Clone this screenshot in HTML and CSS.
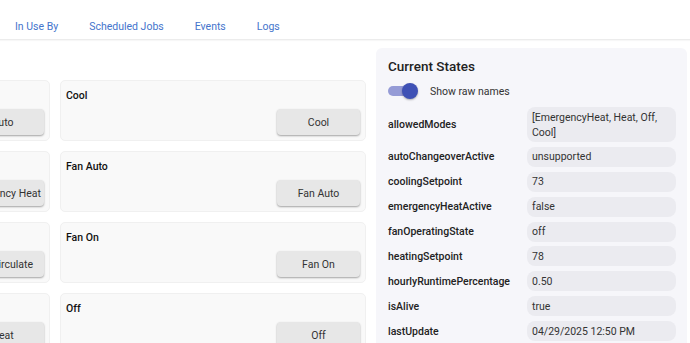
FILE: index.html
```html
<!DOCTYPE html>
<html>
<head>
  <title>Device - Thermostat</title>
  <link rel="stylesheet" href="styles.css">
</head>
<body>
  <div class="tabs">
    <a class="tab">In Use By</a>
    <a class="tab">Scheduled Jobs</a>
    <a class="tab">Events</a>
    <a class="tab">Logs</a>
  </div>

  <div class="main">
    <div class="commands">
      <div class="command-grid">
        <div class="card">
          <div class="card-title">Auto</div>
          <button>Auto</button>
        </div>
        <div class="card">
          <div class="card-title">Cool</div>
          <button>Cool</button>
        </div>
        <div class="card">
          <div class="card-title">Emergency Heat</div>
          <button>Emergency Heat</button>
        </div>
        <div class="card">
          <div class="card-title">Fan Auto</div>
          <button>Fan Auto</button>
        </div>
        <div class="card">
          <div class="card-title">Fan Circulate</div>
          <button>Fan Circulate</button>
        </div>
        <div class="card">
          <div class="card-title">Fan On</div>
          <button>Fan On</button>
        </div>
        <div class="card">
          <div class="card-title">Heat</div>
          <button>Heat</button>
        </div>
        <div class="card">
          <div class="card-title">Off</div>
          <button>Off</button>
        </div>
      </div>
    </div>

    <div class="states">
      <h3>Current States</h3>
      <div class="toggle-row">
        <span class="switch"><span class="knob"></span></span>
        <span>Show raw names</span>
      </div>
      <div class="state-list">
        <div class="state-name">allowedModes</div>
        <div class="state-value">[EmergencyHeat, Heat, Off, Cool]</div>
        <div class="state-name">autoChangeoverActive</div>
        <div class="state-value">unsupported</div>
        <div class="state-name">coolingSetpoint</div>
        <div class="state-value">73</div>
        <div class="state-name">emergencyHeatActive</div>
        <div class="state-value">false</div>
        <div class="state-name">fanOperatingState</div>
        <div class="state-value">off</div>
        <div class="state-name">heatingSetpoint</div>
        <div class="state-value">78</div>
        <div class="state-name">hourlyRuntimePercentage</div>
        <div class="state-value">0.50</div>
        <div class="state-name">isAlive</div>
        <div class="state-value">true</div>
        <div class="state-name">lastUpdate</div>
        <div class="state-value">04/29/2025 12:50 PM</div>
        <div class="state-name">supportedFanModes</div>
        <div class="state-value">[auto, circulate, on]</div>
      </div>
    </div>
  </div>
</body>
</html>
```

FILE: styles.css
```css
body {
  font-family: Roboto, "Noto Sans", sans-serif;
  font-size: 10.5px;
  margin: 0;
  background-color: #fff;
  color: #222;
  overflow: hidden;
}
.tabs {
  display: flex;
  align-items: flex-end;
  gap: 31px;
  height: 40px;
  padding: 0 0 5px 15px;
  box-sizing: border-box;
  border-bottom: 1px solid #ececec;
  box-shadow: 0 1px 1px rgba(0, 0, 0, 0.03);
}
.tab {
  color: #4474cc;
  line-height: 15px;
  cursor: pointer;
}
.main {
  display: flex;
  align-items: flex-start;
}
.commands {
  flex: none;
  width: 366px;
  overflow: hidden;
  padding-top: 40px;
}
.command-grid {
  display: grid;
  grid-template-columns: 306px 306px;
  gap: 10px;
  margin-left: -256px;
}
.card {
  background-color: #f9f9f9;
  border: 1px solid #f0f0f0;
  border-radius: 5px;
  padding: 7px 5px 5px 5px;
}
.card-title {
  font-weight: 500;
  line-height: 16px;
  color: #111;
  margin-bottom: 5px;
}
.card button {
  display: block;
  margin-left: auto;
  min-width: 83px;
  height: 26px;
  padding: 0 2px;
  border: none;
  border-radius: 4px;
  background-color: #e7e7e7;
  box-shadow: 0 1px 2px rgba(0, 0, 0, 0.35);
  font-family: Roboto, sans-serif;
  font-size: 10.5px;
  color: #333;
  white-space: nowrap;
  cursor: pointer;
}
.states {
  flex: 1;
  margin: 8px 3px 0 10px;
  padding: 9px 11px 12px 12px;
  background-color: #f6f6fa;
  border-radius: 6px;
}
.states h3 {
  margin: 0;
  font-size: 13.5px;
  font-weight: 500;
  line-height: 18px;
  color: #222;
}
.toggle-row {
  display: flex;
  align-items: center;
  gap: 13px;
  height: 20px;
  margin-top: 6px;
  color: #333;
}
.switch {
  position: relative;
  width: 29px;
  height: 10px;
  border-radius: 5px;
  background-color: #959bd6;
}
.knob {
  position: absolute;
  right: -1px;
  top: -3px;
  width: 16px;
  height: 16px;
  border-radius: 50%;
  background-color: #3f51b5;
  box-shadow: 0 1px 2px rgba(0, 0, 0, 0.3);
}
.state-list {
  display: grid;
  grid-template-columns: 134px 1fr;
  column-gap: 5px;
  row-gap: 4.9px;
  align-items: center;
  margin-top: 6px;
}
.state-name {
  font-weight: 500;
  color: #222;
}
.state-value {
  background-color: #ebebf0;
  border-radius: 8px;
  padding: 2.5px 5px;
  line-height: 15px;
  color: #333;
}
```
